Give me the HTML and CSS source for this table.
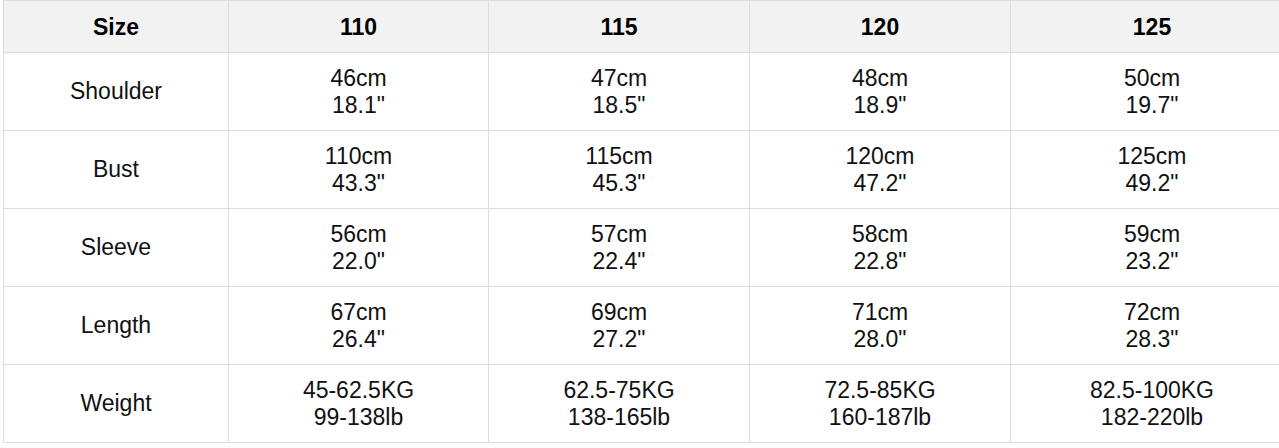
FILE: index.html
```html
<!DOCTYPE html>
<html>
<head>
<meta charset="utf-8">
<link rel="stylesheet" href="styles.css">
</head>
<body>
<table class="size-table">
  <colgroup>
    <col class="c0"><col class="c1"><col class="c2"><col class="c3"><col class="c4">
  </colgroup>
  <thead>
    <tr><th>Size</th><th>110</th><th>115</th><th>120</th><th>125</th></tr>
  </thead>
  <tbody>
    <tr><td>Shoulder</td><td>46cm<br>18.1"</td><td>47cm<br>18.5"</td><td>48cm<br>18.9"</td><td>50cm<br>19.7"</td></tr>
    <tr><td>Bust</td><td>110cm<br>43.3"</td><td>115cm<br>45.3"</td><td>120cm<br>47.2"</td><td>125cm<br>49.2"</td></tr>
    <tr><td>Sleeve</td><td>56cm<br>22.0"</td><td>57cm<br>22.4"</td><td>58cm<br>22.8"</td><td>59cm<br>23.2"</td></tr>
    <tr><td>Length</td><td>67cm<br>26.4"</td><td>69cm<br>27.2"</td><td>71cm<br>28.0"</td><td>72cm<br>28.3"</td></tr>
    <tr><td>Weight</td><td>45-62.5KG<br>99-138lb</td><td>62.5-75KG<br>138-165lb</td><td>72.5-85KG<br>160-187lb</td><td>82.5-100KG<br>182-220lb</td></tr>
  </tbody>
</table>
</body>
</html>
```
FILE: styles.css
```css
html, body {
  margin: 0;
  padding: 0;
  background: #fff;
  overflow: hidden;
}
body {
  padding-left: 3px;
  font-family: "Liberation Sans", Arial, sans-serif;
  color: #111;
}
.size-table {
  border-collapse: collapse;
  table-layout: fixed;
  width: 1290px;
  font-size: 23px;
  line-height: 27px;
}
.c0 { width: 225px; }
.c1 { width: 260px; }
.c2 { width: 261px; }
.c3 { width: 261px; }
.c4 { width: 283px; }
.size-table th,
.size-table td {
  border: 1px solid #dddddd;
  text-align: center;
  vertical-align: middle;
  padding: 11.5px 4px;
}
.size-table th {
  padding: 13px 4px 11px;
  background: #f2f2f2;
  font-weight: bold;
  color: #000;
}
```
